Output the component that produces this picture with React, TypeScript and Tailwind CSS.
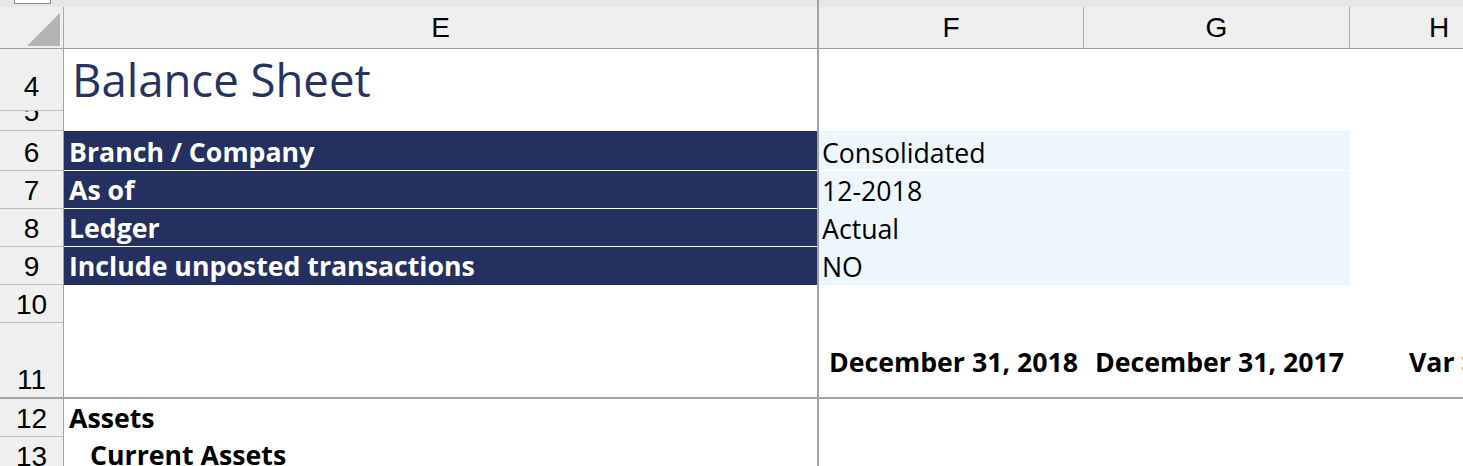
import React from 'react';

const HDR =
  "flex justify-center shrink-0 w-[64px] bg-[#efefef] border-r border-r-[#a0a0a0] border-b border-b-[#bdbdbd] overflow-hidden font-['Liberation_Sans',Arial,sans-serif] text-[28px] leading-[28px] text-black";
const COLH =
  "flex items-center justify-center shrink-0 h-full font-['Liberation_Sans',Arial,sans-serif] text-[28px] leading-[28px] text-black";
const CELL = "font-['Open_Sans',sans-serif] text-[26.7px] leading-[26.7px] whitespace-nowrap";

function VLine() {
  return <div className="w-[2px] shrink-0 self-stretch bg-[#a3a3a3]" />;
}

export default function App() {
  return (
    <div className="w-[1463px] h-[466px] overflow-hidden bg-white">
      <div className="w-[1528px] flex flex-col">
        {/* top strip */}
        <div className="flex h-[7px] bg-[#e6e6e6]">
          <div className="w-[817px] shrink-0">
            <div className="ml-[14px] w-[37px] h-[4px] bg-white border-x border-b border-[#8c8c8c]" />
          </div>
          <VLine />
          <div className="flex-1" />
        </div>

        {/* column header */}
        <div className="flex h-[42px] bg-[#efefef] border-b border-[#9e9e9e]">
          <div className="w-[64px] shrink-0 h-full flex justify-end items-end pr-[3px] pb-[2px] border-r border-[#a8a8a8]">
            <svg width="33" height="33" viewBox="0 0 33 33">
              <polygon points="33,0 33,33 0,33" fill="#b3b3b3" />
            </svg>
          </div>
          <div className={`${COLH} w-[753px]`}>E</div>
          <VLine />
          <div className={`${COLH} w-[265px] border-r border-[#ababab]`}>F</div>
          <div className={`${COLH} w-[266px] border-r border-[#ababab]`}>G</div>
          <div className={`${COLH} w-[178px]`}>H</div>
        </div>

        {/* row 4 */}
        <div className="flex h-[62px]">
          <div className={`${HDR} items-end pb-[9px]`}>4</div>
          <div className="w-[753px] shrink-0 flex items-end pl-[8px] pb-[9px]">
            <span className="font-['Open_Sans',sans-serif] text-[45.5px] leading-[45.5px] text-[#263261] whitespace-nowrap">
              Balance Sheet
            </span>
          </div>
          <VLine />
          <div className="flex-1" />
        </div>

        {/* row 5 */}
        <div className="flex h-[20px]">
          <div className={`${HDR} items-end pb-[4px]`}>5</div>
          <div className="w-[753px] shrink-0" />
          <VLine />
          <div className="flex-1" />
        </div>

        {/* row 6 */}
        <div className="flex h-[40px]">
          <div className={`${HDR} items-end pb-[3px]`}>6</div>
          <div className={`w-[753px] shrink-0 flex items-end pl-[5px] pb-[4px] bg-[#243160] border-b border-white text-white font-bold ${CELL}`}>
            Branch / Company
          </div>
          <VLine />
          <div className={`w-[531px] shrink-0 flex items-end pl-[3px] pb-[3px] bg-[#edf5fd] border-b border-white text-black ${CELL}`}>
            Consolidated
          </div>
          <div className="flex-1" />
        </div>

        {/* row 7 */}
        <div className="flex h-[38px]">
          <div className={`${HDR} items-end pb-[3px]`}>7</div>
          <div className={`w-[753px] shrink-0 flex items-end pl-[5px] pb-[4px] bg-[#243160] border-b border-white text-white font-bold ${CELL}`}>
            As of
          </div>
          <VLine />
          <div className={`w-[531px] shrink-0 flex items-end pl-[3px] pb-[4px] bg-[#edf5fd] text-black ${CELL}`}>
            12-2018
          </div>
          <div className="flex-1" />
        </div>

        {/* row 8 */}
        <div className="flex h-[38px]">
          <div className={`${HDR} items-end pb-[3px]`}>8</div>
          <div className={`w-[753px] shrink-0 flex items-end pl-[5px] pb-[4px] bg-[#243160] border-b border-white text-white font-bold ${CELL}`}>
            Ledger
          </div>
          <VLine />
          <div className={`w-[531px] shrink-0 flex items-end pl-[3px] pb-[4px] bg-[#edf5fd] text-black ${CELL}`}>
            Actual
          </div>
          <div className="flex-1" />
        </div>

        {/* row 9 */}
        <div className="flex h-[38px]">
          <div className={`${HDR} items-end pb-[3px]`}>9</div>
          <div className={`w-[753px] shrink-0 flex items-end pl-[5px] pb-[5px] bg-[#243160] text-white font-bold ${CELL}`}>
            Include unposted transactions
          </div>
          <VLine />
          <div className={`w-[531px] shrink-0 flex items-end pl-[3px] pb-[4px] bg-[#edf5fd] text-black ${CELL}`}>
            NO
          </div>
          <div className="flex-1" />
        </div>

        {/* row 10 */}
        <div className="flex h-[38px]">
          <div className={`${HDR} items-end pb-[3px]`}>10</div>
          <div className="w-[753px] shrink-0" />
          <VLine />
          <div className="flex-1" />
        </div>

        {/* row 11 */}
        <div className="flex h-[74px]">
          <div className={`${HDR} items-end pb-[3px] border-b-0`}>11</div>
          <div className="w-[753px] shrink-0" />
          <VLine />
          <div className={`w-[265px] shrink-0 flex items-end justify-end pr-[6px] pb-[21px] text-black font-bold ${CELL}`}>
            December 31, 2018
          </div>
          <div className={`w-[266px] shrink-0 flex items-end justify-end pr-[6px] pb-[21px] text-black font-bold ${CELL}`}>
            December 31, 2017
          </div>
          <div className={`w-[178px] shrink-0 flex items-end pl-[59px] pb-[21px] text-black font-bold ${CELL}`}>
            Var $
          </div>
        </div>

        {/* frozen horizontal line */}
        <div className="h-[2px] bg-[#a3a3a3]" />

        {/* row 12 */}
        <div className="flex h-[38px]">
          <div className={`${HDR} items-end pb-[3px]`}>12</div>
          <div className={`w-[753px] shrink-0 flex items-end pl-[5px] pb-[5px] text-black font-bold ${CELL}`}>
            Assets
          </div>
          <VLine />
          <div className="flex-1" />
        </div>

        {/* row 13 */}
        <div className="flex h-[38px]">
          <div className={`${HDR} items-end pb-[3px]`}>13</div>
          <div className={`w-[753px] shrink-0 flex items-end pl-[26px] pb-[6px] text-black font-bold ${CELL}`}>
            Current Assets
          </div>
          <VLine />
          <div className="flex-1" />
        </div>
      </div>
    </div>
  );
}
